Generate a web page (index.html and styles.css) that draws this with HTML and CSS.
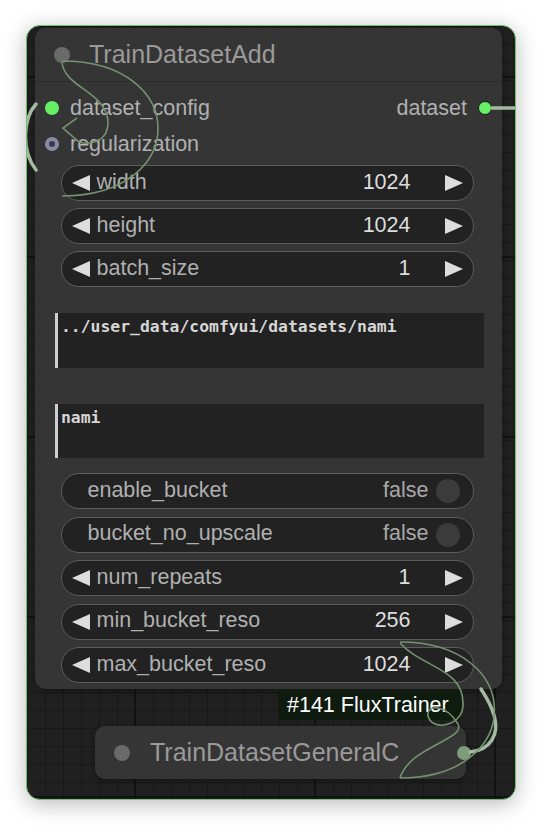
FILE: index.html
```html
<!DOCTYPE html>
<html>
<head>
<meta charset="utf-8">
<link rel="stylesheet" href="styles.css">
</head>
<body>
<div class="frame">
  <div class="node main">
    <div class="title">
      <span class="title-dot"></span>
      <span class="title-text">TrainDatasetAdd</span>
    </div>
    <div class="io">
      <div class="io-row">
        <div class="in"><span class="slot green"></span><span>dataset_config</span></div>
        <div class="out"><span>dataset</span><span class="slot green outline"></span></div>
      </div>
      <div class="io-row">
        <div class="in"><span class="slot ring"></span><span>regularization</span></div>
      </div>
    </div>
    <div class="widgets first">
      <div class="pill num">
        <svg class="arrow" viewBox="0 0 18 16"><polygon points="18,0 18,16 0,8"/></svg>
        <span class="label">width</span><span class="value">1024</span>
        <svg class="arrow right" viewBox="0 0 18 16"><polygon points="0,0 0,16 18,8"/></svg>
      </div>
      <div class="pill num">
        <svg class="arrow" viewBox="0 0 18 16"><polygon points="18,0 18,16 0,8"/></svg>
        <span class="label">height</span><span class="value">1024</span>
        <svg class="arrow right" viewBox="0 0 18 16"><polygon points="0,0 0,16 18,8"/></svg>
      </div>
      <div class="pill num">
        <svg class="arrow" viewBox="0 0 18 16"><polygon points="18,0 18,16 0,8"/></svg>
        <span class="label">batch_size</span><span class="value">1</span>
        <svg class="arrow right" viewBox="0 0 18 16"><polygon points="0,0 0,16 18,8"/></svg>
      </div>
    </div>
    <div class="textarea t1">../user_data/comfyui/datasets/nami</div>
    <div class="textarea t2">nami</div>
    <div class="widgets second">
      <div class="pill toggle">
        <span class="label">enable_bucket</span><span class="value">false</span><span class="knob"></span>
      </div>
      <div class="pill toggle">
        <span class="label">bucket_no_upscale</span><span class="value">false</span><span class="knob"></span>
      </div>
      <div class="pill num">
        <svg class="arrow" viewBox="0 0 18 16"><polygon points="18,0 18,16 0,8"/></svg>
        <span class="label">num_repeats</span><span class="value">1</span>
        <svg class="arrow right" viewBox="0 0 18 16"><polygon points="0,0 0,16 18,8"/></svg>
      </div>
      <div class="pill num">
        <svg class="arrow" viewBox="0 0 18 16"><polygon points="18,0 18,16 0,8"/></svg>
        <span class="label">min_bucket_reso</span><span class="value">256</span>
        <svg class="arrow right" viewBox="0 0 18 16"><polygon points="0,0 0,16 18,8"/></svg>
      </div>
      <div class="pill num">
        <svg class="arrow" viewBox="0 0 18 16"><polygon points="18,0 18,16 0,8"/></svg>
        <span class="label">max_bucket_reso</span><span class="value">1024</span>
        <svg class="arrow right" viewBox="0 0 18 16"><polygon points="0,0 0,16 18,8"/></svg>
      </div>
    </div>
  </div>
  <div class="node-label">#141 FluxTrainer</div>
  <div class="node small">
    <span class="title-dot"></span>
    <span class="title-text">TrainDatasetGeneralC</span>
    <span class="out-slot"></span>
  </div>
  <svg class="links" viewBox="27 26 488 773" width="488" height="773">
    <path class="thick" d="M36 104 C22 120, 22 152, 36 170"/>
    <path class="thick" d="M492 108 L520 108"/>
    <path class="thick" d="M470 752 C490 750, 500 735, 494 715 C490 702, 484 694, 481 689"/>
    <path class="thin" d="M62 61 C190 61, 190 196, 62 196"/>
    <path class="thin" d="M62 62 C64 88, 108 92, 108 123 C108 140, 92 146, 79 142 L63 128 L77 118"/>
    <path class="thin" d="M400 642 C526 642, 526 778, 400 778"/>
    <path class="thin" d="M400 643 C422 668, 465 668, 463 706 C462 726, 432 732, 428 716 C426 704, 446 704, 458 724 C466 740, 410 746, 400 778"/>
  </svg>
</div>
</body>
</html>
```
FILE: styles.css
```css
html, body {
  margin: 0;
  padding: 0;
  background: #ffffff;
}
body {
  width: 542px;
  height: 827px;
  font-family: "Liberation Sans", Arial, sans-serif;
  padding-top: 25px;
  padding-left: 26px;
  box-sizing: border-box;
}
.frame {
  position: relative;
  width: 490px;
  height: 775px;
  box-sizing: border-box;
  border: 1px solid #6fbf6f;
  border-radius: 14px;
  overflow: hidden;
  background-color: #202020;
  background-image:
    linear-gradient(90deg, #121212 2px, transparent 2px),
    linear-gradient(#121212 2px, transparent 2px),
    linear-gradient(90deg, #181818 1px, transparent 1px),
    linear-gradient(#181818 1px, transparent 1px);
  background-size: 180px 180px, 180px 180px, 18px 18px, 18px 18px;
  background-position: 107px 0, 0 50px, 0 0, 0 0;
  box-shadow: 0 4px 22px rgba(0, 0, 0, 0.28);
  display: flex;
  flex-direction: column;
}
.node {
  background: #353535;
  border-radius: 10px;
}
.main {
  margin-top: 2px;
  margin-left: 8px;
  width: 467px;
  padding-bottom: 6px;
  box-shadow: 0 2px 6px rgba(0, 0, 0, 0.35);
}
.title {
  height: 54px;
  box-sizing: border-box;
  border-bottom: 1px solid #2b2b2b;
  display: flex;
  align-items: center;
  padding-left: 19px;
  gap: 19px;
}
.title-dot {
  width: 16px;
  height: 16px;
  border-radius: 50%;
  background: #6a6a6a;
  flex: none;
}
.title-text {
  font-size: 25px;
  color: #9a9a9a;
  line-height: 1;
}
.io {
  padding-top: 8px;
}
.io-row {
  height: 36px;
  display: flex;
  align-items: center;
  justify-content: space-between;
  padding: 0 10px;
  font-size: 21.5px;
  color: #b0b0b0;
}
.in, .out {
  display: flex;
  align-items: center;
  gap: 11px;
}
.slot {
  width: 14px;
  height: 14px;
  border-radius: 50%;
  box-sizing: border-box;
  flex: none;
}
.slot.green {
  background: #66f066;
}
.slot.outline {
  border: 1.5px solid #1a1a1a;
}
.slot.ring {
  background: #3b3b48;
  border: 4.5px solid #8a8aa6;
}
.widgets {
  margin-left: 26px;
  width: 413px;
  display: flex;
  flex-direction: column;
  gap: 7px;
}
.widgets.first {
  margin-top: 3px;
}
.widgets.second {
  margin-top: 15px;
  gap: 7.5px;
}
.pill {
  height: 36px;
  box-sizing: border-box;
  border: 1.5px solid #5c5c5c;
  border-radius: 18px;
  background: #222222;
  display: flex;
  align-items: center;
  font-size: 21.5px;
  line-height: 1;
  padding-bottom: 1px;
}
.pill.num {
  padding-left: 9.5px;
  padding-right: 10.5px;
}
.arrow {
  width: 18px;
  height: 16px;
  fill: #dddddd;
  flex: none;
  margin-top: 1px;
}
.arrow.right {
  margin-left: 34px;
}
.label {
  color: #b0b0b0;
  flex: 1;
}
.num .label {
  margin-left: 7px;
}
.value {
  color: #dddddd;
}
.toggle .value {
  color: #a8a8a8;
}
.pill.toggle {
  padding-left: 25.5px;
  padding-right: 13.5px;
}
.knob {
  width: 24px;
  height: 24px;
  border-radius: 50%;
  background: #3b3b3b;
  margin-left: 7px;
  margin-top: 1px;
  flex: none;
}
.textarea {
  margin-left: 20px;
  width: 429px;
  box-sizing: border-box;
  background: #222222;
  border-left: 3px solid #cfcfcf;
  padding: 4px 3px;
  font-family: "DejaVu Sans Mono", "Liberation Mono", monospace;
  font-size: 16.4px;
  line-height: 20px;
  font-weight: bold;
  color: #d6d6d6;
}
.t1 {
  margin-top: 26px;
  height: 55px;
}
.t2 {
  margin-top: 36px;
  height: 54px;
}
.node-label {
  margin-top: 1px;
  margin-left: 251px;
  width: 183px;
  height: 30px;
  box-sizing: border-box;
  background: #0e1b0e;
  border-radius: 3px;
  padding-left: 9px;
  display: flex;
  align-items: center;
  font-size: 21.5px;
  color: #ffffff;
}
.small {
  margin-top: 6px;
  margin-left: 68px;
  width: 371px;
  height: 53px;
  display: flex;
  align-items: center;
  padding-left: 19px;
  box-sizing: border-box;
  gap: 20px;
  position: relative;
  box-shadow: 0 2px 6px rgba(0, 0, 0, 0.35);
}
.out-slot {
  position: absolute;
  right: -5px;
  top: 20px;
  width: 14px;
  height: 14px;
  border-radius: 50%;
  background: #7c9c7a;
}
.links {
  position: absolute;
  left: 0;
  top: 0;
  pointer-events: none;
}
.links path {
  fill: none;
}
.links .thin {
  stroke: #74926f;
  stroke-width: 1.6;
}
.links .thick {
  stroke: #a3b9a1;
  stroke-width: 3.5;
  stroke-linecap: round;
}
```
